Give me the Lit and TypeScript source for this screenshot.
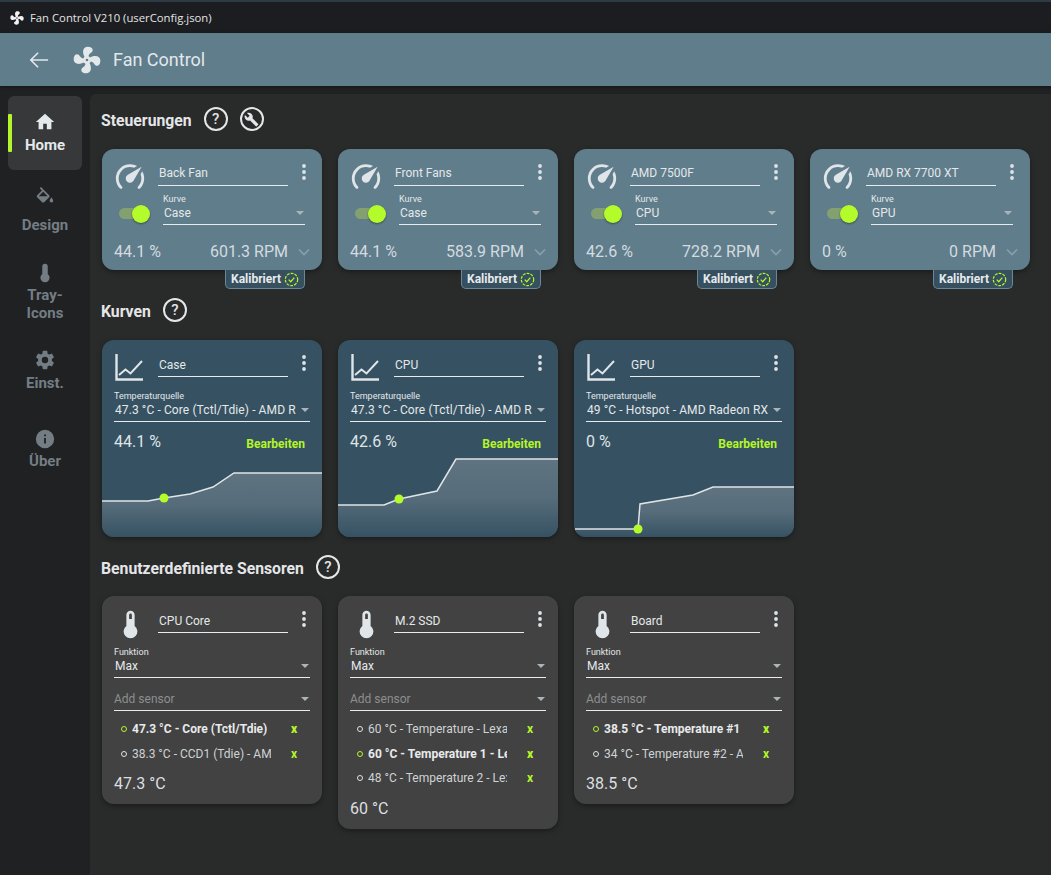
import { LitElement, html, css, svg } from "lit";
import { customElement } from "lit/decorators.js";

const P = {
  fan: "M12,11A1,1 0 0,0 11,12A1,1 0 0,0 12,13A1,1 0 0,0 13,12A1,1 0 0,0 12,11M12.5,2C17,2 17.11,5.57 14.75,6.75C13.76,7.24 13.32,8.29 13.13,9.22C13.61,9.42 14.03,9.73 14.35,10.13C18.05,8.13 22.03,8.92 22.03,12.5C22.03,17 18.46,17.1 17.28,14.73C16.78,13.74 15.72,13.3 14.79,13.11C14.59,13.59 14.28,14 13.88,14.34C15.87,18.03 15.08,22 11.5,22C7,22 6.91,18.42 9.27,17.24C10.25,16.75 10.69,15.71 10.89,14.79C10.4,14.59 9.97,14.27 9.65,13.87C5.96,15.85 2,15.07 2,11.5C2,7 5.56,6.89 6.74,9.26C7.24,10.25 8.29,10.68 9.22,10.87C9.41,10.39 9.73,9.97 10.14,9.65C8.15,5.96 8.94,2 12.5,2Z",
  home: "M10 20v-6h4v6h5v-8h3L12 3 2 12h3v8z",
  paint: "M19,11.5C19,11.5 17,13.67 17,15A2,2 0 0,0 19,17A2,2 0 0,0 21,15C21,13.67 19,11.5 19,11.5M5.21,10L10,5.21L14.79,10M16.56,8.94L7.62,0L6.21,1.41L8.59,3.79L3.44,8.94C2.85,9.5 2.85,10.47 3.44,11.06L8.94,16.56C9.23,16.85 9.62,17 10,17C10.38,17 10.77,16.85 11.06,16.56L16.56,11.06C17.15,10.47 17.15,9.5 16.56,8.94Z",
  thermo: "M15 13V5A3 3 0 0 0 9 5V13A5 5 0 1 0 15 13Z",
  thermoSlit: "M15 13V5A3 3 0 0 0 9 5V13A5 5 0 1 0 15 13ZM12 4A1 1 0 0 1 13 5V8H11V5A1 1 0 0 1 12 4Z",
  cog: "M12,15.5A3.5,3.5 0 0,1 8.5,12A3.5,3.5 0 0,1 12,8.5A3.5,3.5 0 0,1 15.5,12A3.5,3.5 0 0,1 12,15.5M19.43,12.97C19.47,12.65 19.5,12.33 19.5,12C19.5,11.67 19.47,11.34 19.43,11L21.54,9.37C21.73,9.22 21.78,8.95 21.66,8.73L19.66,5.27C19.54,5.05 19.27,4.96 19.05,5.05L16.56,6.05C16.04,5.66 15.5,5.32 14.87,5.07L14.5,2.42C14.46,2.18 14.25,2 14,2H10C9.75,2 9.54,2.18 9.5,2.42L9.13,5.07C8.5,5.32 7.96,5.66 7.44,6.05L4.95,5.05C4.73,4.96 4.46,5.05 4.34,5.27L2.34,8.73C2.21,8.95 2.27,9.22 2.46,9.37L4.57,11C4.53,11.34 4.5,11.67 4.5,12C4.5,12.33 4.53,12.65 4.57,12.97L2.46,14.63C2.27,14.78 2.21,15.05 2.34,15.27L4.34,18.73C4.46,18.95 4.73,19.03 4.95,18.95L7.44,17.94C7.96,18.34 8.5,18.68 9.13,18.93L9.5,21.58C9.54,21.82 9.75,22 10,22H14C14.25,22 14.46,21.82 14.5,21.58L14.87,18.93C15.5,18.67 16.04,18.34 16.56,17.94L19.05,18.95C19.27,19.03 19.54,18.95 19.66,18.73L21.66,15.27C21.78,15.05 21.73,14.78 21.54,14.63L19.43,12.97Z",
  info: "M13,9H11V7H13M13,17H11V11H13M12,2A10,10 0 0,0 2,12A10,10 0 0,0 12,22A10,10 0 0,0 22,12A10,10 0 0,0 12,2Z",
  gauge: "M12,16A3,3 0 0,1 9,13C9,11.88 9.61,10.9 10.5,10.39L20.21,4.77L14.68,14.35C14.18,15.33 13.17,16 12,16M12,3C13.81,3 15.5,3.5 16.97,4.32L14.87,5.53C14,5.19 13,5 12,5A8,8 0 0,0 4,13C4,15.21 4.89,17.21 6.34,18.65H6.35C6.74,19.04 6.74,19.67 6.35,20.06C5.96,20.45 5.32,20.45 4.93,20.07V20.07C3.12,18.26 2,15.76 2,13A10,10 0 0,1 12,3M22,13C22,15.76 20.88,18.26 19.07,20.07V20.07C18.68,20.45 18.05,20.45 17.66,20.06C17.27,19.67 17.27,19.04 17.66,18.65V18.65C19.11,17.2 20,15.21 20,13C20,12 19.81,11 19.46,10.1L20.67,8C21.5,9.5 22,11.18 22,13Z",
  wrench: "M22.7,19L13.6,9.9C14.5,7.6 14,4.9 12.1,3C10.1,1 7.1,0.6 4.7,1.7L9,6L6,9L1.6,4.7C0.4,7.1 0.9,10.1 2.9,12.1C4.8,14 7.5,14.5 9.8,13.6L18.9,22.7C19.3,23.1 19.9,23.1 20.3,22.7L22.6,20.4C23.1,20 23.1,19.3 22.7,19Z",
};

const icon = (d: string, cls = "") =>
  html`<svg class=${cls} viewBox="0 0 24 24" fill="currentColor" fill-rule="evenodd"><path d=${d}></path></svg>`;

const dots = html`<svg class="dots" viewBox="0 0 6 18"><circle cx="3" cy="3" r="1.9"></circle><circle cx="3" cy="9" r="1.9"></circle><circle cx="3" cy="15" r="1.9"></circle></svg>`;

const arrow = html`<span class="arrow"></span>`;

const chartIcon = html`<svg class="chart-ico" viewBox="0 0 30 28" fill="none" stroke="#dfe5e8" stroke-width="2.4"><path d="M1.5 0V25.5H28"></path><path d="M4 21L10.5 15.5L15.5 19.5L27 7" stroke-width="2"></path></svg>`;

const help = html`<span class="circ">?</span>`;

const section = (t: string, extra: unknown = "") =>
  html`<div class="head"><span class="h-title">${t}</span>${help}${extra}</div>`;

const name = (t: string) => html`<div class="name"><span>${t}</span></div>${dots}`;

const field = (label: string, value: string) => html`
  <div class="field">
    <div class="f-label">${label}</div>
    <div class="f-row"><span class="f-val">${value}</span>${arrow}</div>
  </div>`;

const fans = [
  ["Back Fan", "Case", "44.1 %", "601.3 RPM"],
  ["Front Fans", "Case", "44.1 %", "583.9 RPM"],
  ["AMD 7500F", "CPU", "42.6 %", "728.2 RPM"],
  ["AMD RX 7700 XT", "GPU", "0 %", "0 RPM"],
];

const curves = [
  { n: "Case", src: "47.3 °C - Core (Tctl/Tdie) - AMD R", pct: "44.1 %",
    pts: "0,51 46,51 62,48 88,44 111,37 132,23 220,23", dot: [62, 48] },
  { n: "CPU", src: "47.3 °C - Core (Tctl/Tdie) - AMD R", pct: "42.6 %",
    pts: "0,55 46,55 61,49 99,41 118,9 220,9", dot: [61, 49] },
  { n: "GPU", src: "49 °C - Hotspot - AMD Radeon RX", pct: "0 %",
    pts: "1,79 64,79 66,54 119,45 139,37 220,37", dot: [64, 79] },
];

const sensors = [
  { n: "CPU Core", val: "47.3 °C", items: [["47.3 °C - Core (Tctl/Tdie)", true], ["38.3 °C - CCD1 (Tdie) - AMD", false]] },
  { n: "M.2 SSD", val: "60 °C", items: [["60 °C - Temperature - Lexa", false], ["60 °C - Temperature 1 - Le", true], ["48 °C - Temperature 2 - Lex", false]] },
  { n: "Board", val: "38.5 °C", items: [["38.5 °C - Temperature #1", true], ["34 °C - Temperature #2 - A", false]] },
];

@customElement("app-root")
export class AppRoot extends LitElement {
  static styles = css`
    :host { display: block; height: 875px; overflow: hidden; background: #1f2123; font-family: Roboto, "Noto Sans", sans-serif; color: #e2e6e8; }
    svg { display: block; }
    .titlebar { height: 31px; border-top: 2px solid #2e3a44; background: #1b1d20; display: flex; align-items: center; padding-left: 9px; gap: 5px; font: 11.3px "Open Sans", sans-serif; color: #e4e4e4; }
    .titlebar svg { width: 16px; height: 16px; color: #f2f2f2; }
    .appbar { height: 53px; background: #607d8b; display: flex; align-items: center; padding-left: 29px; box-shadow: 0 1px 3px rgba(0,0,0,.4); color: #e3e8eb; position: relative; }
    .appbar .back { width: 20px; height: 20px; margin-right: 22px; }
    .appbar .logo { width: 32px; height: 32px; margin-right: 10px; }
    .appbar span { font-size: 18px; }
    .body { display: flex; height: 789px; }
    .side { width: 90px; flex: none; display: flex; flex-direction: column; align-items: stretch; padding: 10px 8px 0; box-sizing: border-box; color: #747d84; font-weight: 700; font-size: 15px; line-height: 18px; text-align: center; }
    .item { display: flex; flex-direction: column; align-items: center; width: 74px; }
    .item svg { width: 22px; height: 22px; }
    .item.home { height: 74px; box-sizing: border-box; padding-top: 15px; gap: 3px; background: #37383a; border-radius: 6px; color: #e4e9ec; position: relative; }
    .bar { position: absolute; left: 0; top: 18px; width: 4px; height: 38px; background: #b4f52b; border-radius: 1px; }
    .item.design { margin-top: 17px; gap: 7px; }
    .item.tray { margin-top: 28px; gap: 2px; }
    .item.einst { margin-top: 27px; gap: 3px; }
    .item.uber { margin-top: 36px; gap: 2px; }
    .main { flex: 1; margin-top: 8px; background: #292a2a; border-top-left-radius: 6px; padding: 10px 0 0 12px; }
    .head { height: 30px; display: flex; align-items: center; gap: 12px; margin: 0 0 15px -1px; }
    .head.k { margin-top: 6px; }
    .head.s { margin-top: 15px; margin-bottom: 14px; }
    .h-title { font-size: 15.75px; font-weight: 700; color: #e4e6e7; padding-top: 2px; }
    .circ { width: 20px; height: 20px; border: 2px solid #e4e6e7; border-radius: 50%; display: flex; align-items: center; justify-content: center; font-size: 15px; font-weight: 500; color: #e4e6e7; }
    .circ svg { width: 15px; height: 15px; }
    .grid { display: grid; grid-template-columns: repeat(4, 220px); column-gap: 16px; align-items: start; }
    .card { border-radius: 12px; box-shadow: 0 2px 5px rgba(0,0,0,.35); box-sizing: border-box; }
    .fan-card { background: #607d8b; height: 121px; padding: 14px 12px 0; }
    .curve-card { background: #365262; height: 197px; overflow: hidden; display: flex; flex-direction: column; }
    .sensor-card { background: #424242; padding: 14px 12px 9px; }
    .top { display: flex; align-items: flex-start; height: 23px; }
    .ico { width: 34px; height: 34px; margin: -3px 11px 0 -1px; flex: none; color: #dfe5e8; }
    .chart-ico { width: 30px; height: 28px; margin: 0 13px 0 1px; flex: none; }
    .th-ico { width: 33px; height: 33px; margin: -2px 11px 0 0; flex: none; color: #dfe5e8; }
    .name { flex: none; width: 130px; height: 23px; box-sizing: border-box; border-bottom: 1px solid #e8ecee; font-size: 12px; line-height: 18px; padding: 1px 0 0 1px; color: #e4e8ea; }
    .curve-card .name, .sensor-card .name { padding-top: 2px; }
    .dots { width: 6px; height: 18px; fill: #dde3e6; margin: 0 0 0 13px; flex: none; }
    .fan-row { display: flex; align-items: flex-start; margin-top: 8px; }
    .toggle { width: 30px; height: 11px; border-radius: 6px; background: #83a070; position: relative; margin: 14px 14px 0 5px; flex: none; }
    .toggle i { position: absolute; right: -1px; top: -3.5px; width: 18px; height: 18px; border-radius: 50%; background: #b4fb2c; box-shadow: 0 1px 2px rgba(0,0,0,.4); }
    .field { flex: 1; min-width: 0; border-bottom: 1px solid #e8ecee; box-sizing: border-box; padding-bottom: 3px; }
    .fan-row .field { margin-right: 5px; }
    .f-label { font-size: 9px; line-height: 11px; color: #e4e8ea; }
    .f-row { display: flex; align-items: center; height: 16px; padding-left: 1px; font-size: 12px; color: #e4e8ea; }
    .f-val { flex: 1; min-width: 0; white-space: nowrap; }
    .ph { padding-left: 0; }
    .ph .f-val { color: #8c8f90; }
    .arrow { width: 0; height: 0; border-left: 4px solid transparent; border-right: 4px solid transparent; border-top: 4px solid #aab4ba; margin: 0 1px 0 3px; flex: none; }
    .stats { display: flex; align-items: center; margin-top: 17px; font-size: 16px; color: #d3dbe0; }
    .stats .rpm { margin-left: auto; }
    .chev { width: 12px; height: 8px; margin: 0 0 0 10px; flex: none; }
    .fan-cell { display: flex; flex-direction: column; }
    .badge { align-self: flex-end; margin-right: 17px; height: 19px; width: 80px; box-sizing: border-box; background: #37505f; border: 1px solid #6b8797; border-top: none; border-radius: 0 0 5px 5px; display: flex; align-items: center; justify-content: center; gap: 3px; font-size: 12px; font-weight: 700; color: #e6eaec; }
    .badge svg { width: 15px; height: 15px; }
    .curve-top { height: 110px; flex: none; padding: 14px 12px 0; box-sizing: border-box; }
    .curve-top .field { flex: none; margin-top: 14px; }
    .curve-top .f-val { letter-spacing: .1px; }
    .curve-stats { display: flex; justify-content: space-between; align-items: center; margin-top: 10px; font-size: 16px; color: #dfe4e7; padding-right: 5px; }
    .edit { color: #b4f52b; font-size: 12px; font-weight: 700; margin-top: 5px; }
    .curve { width: 220px; height: 87px; }
    .sensor-card .field { flex: none; margin-top: 14px; }
    .sensor-card .field.add { margin-top: 0; padding-top: 13px; }
    .sensor-list { margin-top: 6px; display: flex; flex-direction: column; }
    .s-item { height: 24.5px; display: flex; align-items: center; font-size: 12px; color: #cfd3d5; }
    .s-item.on { font-weight: 700; color: #e8eaeb; }
    .s-item i { width: 4px; height: 4px; border: 1px solid #dfe2e3; border-radius: 50%; margin: 0 5px 0 7px; flex: none; }
    .s-item.on i { border-color: #b4f52b; }
    .s-item span { width: 139px; overflow: hidden; white-space: nowrap; flex: none; }
    .s-item b { color: #b4f52b; font-size: 12px; margin-left: 20px; }
    .s-val { font-size: 16px; color: #dcdfe0; margin-top: 7px; line-height: 22px; }
  `;

  render() {
    const calib = html`<div class="badge">Kalibriert
      <svg viewBox="0 0 16 16" fill="none" stroke="#b4f52b" stroke-width="1.3"><circle cx="8" cy="8" r="6.6" stroke-dasharray="3 1.2"></circle><path d="M5 8.2L7.2 10.4L11 6"></path></svg>
    </div>`;
    return html`
      <div class="titlebar">${icon(P.fan)}<span>Fan Control V210 (userConfig.json)</span></div>
      <div class="appbar">
        <svg class="back" viewBox="0 0 22 22" fill="none" stroke="currentColor" stroke-width="1.8"><path d="M21 11H2M10 3L2 11L10 19"></path></svg>
        ${icon(P.fan, "logo")}<span>Fan Control</span>
      </div>
      <div class="body">
        <nav class="side">
          <div class="item home"><i class="bar"></i>${icon(P.home)}Home</div>
          <div class="item design">${icon(P.paint)}Design</div>
          <div class="item tray">${icon(P.thermo)}<span>Tray-<br />Icons</span></div>
          <div class="item einst">${icon(P.cog)}Einst.</div>
          <div class="item uber">${icon(P.info)}Über</div>
        </nav>
        <main class="main">
          ${section("Steuerungen", html`<span class="circ">${icon(P.wrench)}</span>`)}
          <div class="grid">
            ${fans.map((f) => html`<div class="fan-cell">
              <div class="card fan-card">
                <div class="top">${icon(P.gauge, "ico")}${name(f[0])}</div>
                <div class="fan-row"><span class="toggle"><i></i></span>${field("Kurve", f[1])}</div>
                <div class="stats"><span>${f[2]}</span><span class="rpm">${f[3]}</span>
                  <svg class="chev" viewBox="0 0 12 8" fill="none" stroke="#8ba0ac" stroke-width="1.6"><path d="M1 1.5L6 6.5L11 1.5"></path></svg></div>
              </div>
              ${calib}
            </div>`)}
          </div>
          <div class="head k"><span class="h-title">Kurven</span>${help}</div>
          <div class="grid">
            ${curves.map((c, i) => html`<div class="card curve-card">
              <div class="curve-top">
                <div class="top">${chartIcon}${name(c.n)}</div>
                ${field("Temperaturquelle", c.src)}
                <div class="curve-stats"><span>${c.pct}</span><span class="edit">Bearbeiten</span></div>
              </div>
              <svg class="curve" viewBox="0 0 220 87">
                <defs><linearGradient id="g${i}" x1="0" y1="0" x2="0" y2="1" gradientUnits="objectBoundingBox"><stop offset="0" stop-color="#5f7380"></stop><stop offset=".5" stop-color="#566c7a"></stop><stop offset="1" stop-color="#365262"></stop></linearGradient></defs>
                ${svg`<polygon points="${c.pts} 220,87 0,87" fill="url(#g${i})"></polygon>
                <polyline points=${c.pts} fill="none" stroke="#dfe4e7" stroke-width="1.5"></polyline>
                <circle cx=${c.dot[0]} cy=${c.dot[1]} r="4.5" fill="#b4fb2c"></circle>`}
              </svg>
            </div>`)}
          </div>
          <div class="head s"><span class="h-title">Benutzerdefinierte Sensoren</span>${help}</div>
          <div class="grid">
            ${sensors.map((s) => html`<div class="card sensor-card">
              <div class="top">${icon(P.thermoSlit, "th-ico")}${name(s.n)}</div>
              ${field("Funktion", "Max")}
              <div class="field add"><div class="f-row ph"><span class="f-val">Add sensor</span>${arrow}</div></div>
              <div class="sensor-list">
                ${s.items.map((it) => html`<div class="s-item ${it[1] ? "on" : ""}"><i></i><span>${it[0]}</span><b>x</b></div>`)}
              </div>
              <div class="s-val">${s.val}</div>
            </div>`)}
          </div>
        </main>
      </div>
    `;
  }
}
